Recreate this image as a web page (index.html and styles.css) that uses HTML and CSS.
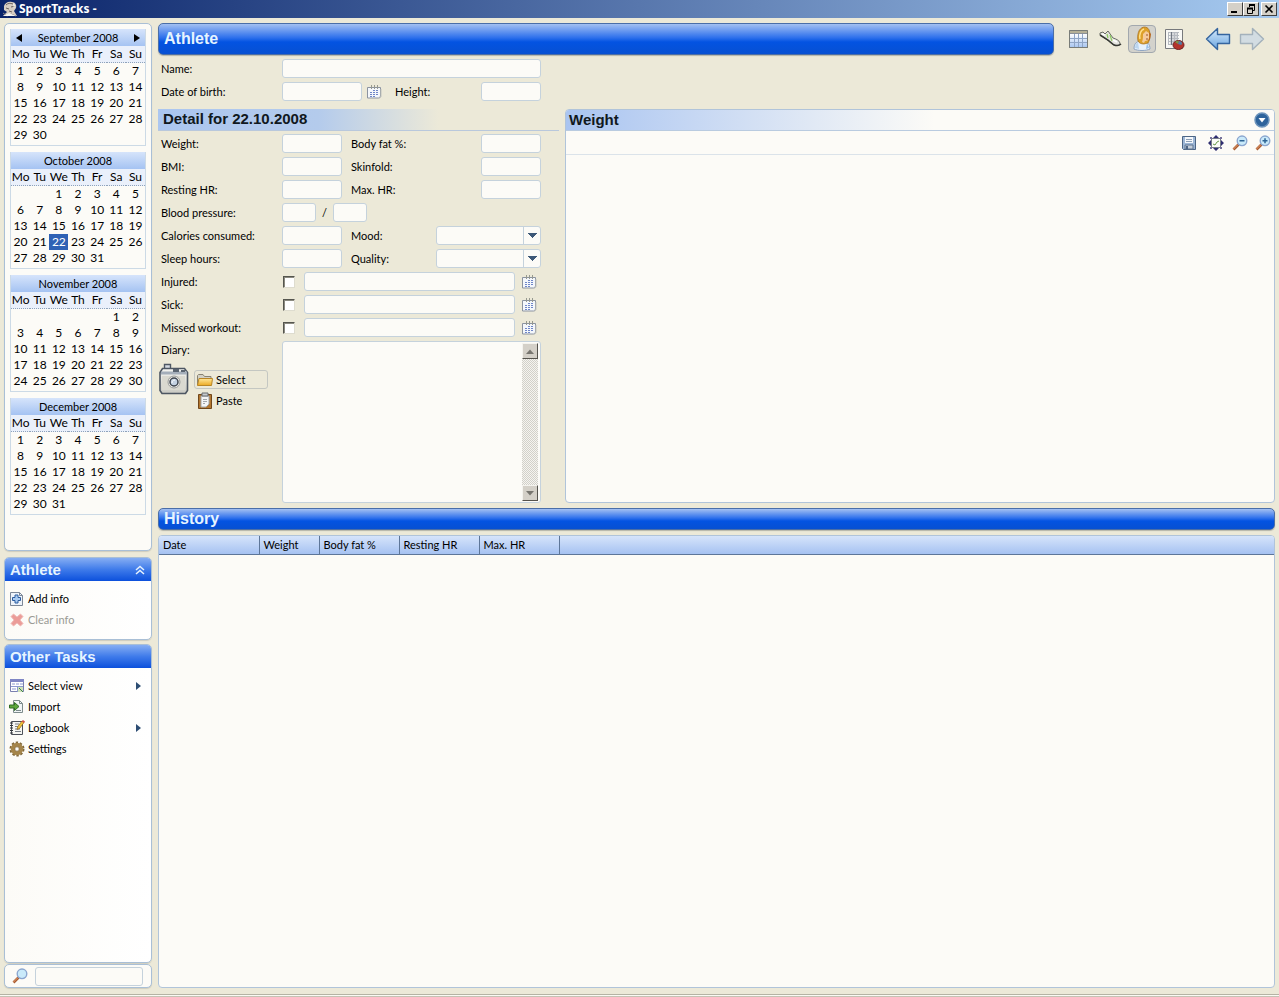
FILE: index.html
```html
<!DOCTYPE html>
<html lang="en">
<head>
<meta charset="utf-8">
<title>SportTracks</title>
<link rel="stylesheet" href="styles.css">
</head>
<body>
<svg class="defs" aria-hidden="true">
  <defs>
    <linearGradient id="gold" x2="0" y2="1"><stop offset="0" stop-color="#ffe79a"/><stop offset="1" stop-color="#eba922"/></linearGradient>
    <linearGradient id="arrowBlue" x2="0" y2="1"><stop offset="0" stop-color="#d5e9fb"/><stop offset="1" stop-color="#6aa5e0"/></linearGradient>
    <linearGradient id="silver" x2="0" y2="1"><stop offset="0" stop-color="#f6f6f2"/><stop offset="1" stop-color="#c9c9c2"/></linearGradient>
    <linearGradient id="cells" x2="0" y2="1"><stop offset="0" stop-color="#ffffff"/><stop offset="1" stop-color="#a9c6f0"/></linearGradient>
  </defs>
  <symbol id="i-date" viewBox="0 0 15 14">
    <path d="M.5 2.500h13v9l-2 1.500h-11z" fill="#f4f7fb" stroke="#8b93a0"/>
    <path d="M14 4v8l-2 1.500" fill="none" stroke="#c2c4bd"/>
    <path d="M4.500 0v4M7.500 0v4M10.500 0v4" stroke="#96998f"/>
    <path d="M6 5h2v1H6zM9 5h2v1H9zM3 7h2v1H3zM6 7h2v1H6zM9 7h2v1H9zM3 9h2v1H3zM6 9h2v1H6zM9 9h2v1H9zM3 11h2v1H3zM6 11h2v1H6z" fill="#6f86c8"/>
  </symbol>
  <symbol id="i-lens" viewBox="0 0 16 16">
    <path d="M1.500 14.500l5-5" stroke="#a85a30" stroke-width="2.600"/><path d="M1.500 14l4.500-4.500" stroke="#e8a070"/>
    <circle cx="10" cy="5.800" r="4.800" fill="#c9eafa" stroke="#8ba6cf" stroke-width="1.400"/>
  </symbol>
</svg>

<header class="titlebar">
  <svg class="app-icon" width="16" height="16" viewBox="0 0 16 16"><path d="M2 5C3 2 6 0 10 1c3 0 5 3 4 6l-2 3 3 5H1l4-4-3-2z" fill="#d6cdc2"/><path d="M4 4c2-2 4-2 7-1M4 7l3 1M9 6l4-1M7 10l3 1" stroke="#6d6360" fill="none"/><path d="M1 12l4 3 4-2 5 2" stroke="#8b8480" fill="none"/><path d="M1 15l6-3 7 3zM11 2l2 2-1 4" fill="#f5f4f0"/></svg>
  <h1 class="app-title">SportTracks -</h1>
  <div class="window-buttons">
    <button class="win-btn" aria-label="Minimize"><svg width="12" height="10"><path d="M2 8h6" stroke="#000" stroke-width="2"/></svg></button>
    <button class="win-btn" aria-label="Restore"><svg width="12" height="10" fill="none" stroke="#000"><path d="M4 1h6M2 4.500h6" stroke-width="2"/><path d="M4.500 1v2M9.500 1v5.500H8M2.500 4v5.500h5V4"/></svg></button>
    <button class="win-btn win-close" aria-label="Close"><svg width="12" height="10"><path d="M2.500 1.500l7 7M9.500 1.500l-7 7" stroke="#000" stroke-width="1.600"/></svg></button>
  </div>
</header>

<div class="workspace">
  <aside class="sidebar">
    <section class="box calendars" id="calendars"></section>

    <section class="box task-panel">
      <h2 class="panel-title">Athlete
        <button class="collapse" aria-label="Collapse"><svg width="10" height="10" fill="none" stroke="#e6f2ff" stroke-width="1.500"><path d="M1 5l4-3.500L9 5M1 9l4-3.500L9 9"/></svg></button>
      </h2>
      <ul class="tasks">
        <li><button class="task"><svg width="16" height="16" viewBox="0 0 16 16"><path d="M1.500 1.500h9l3 3v10h-12z" fill="#eef3fa" stroke="#7c8797"/><path d="M10.500 1.500v3h3" fill="none" stroke="#7c8797"/><path d="M6 4h3v2.500h2.500v3H9V12H6V9.500H3.500v-3H6z" fill="#a9cbf2" stroke="#2c5c9e"/></svg>Add info</button></li>
        <li><button class="task" disabled><svg width="16" height="16" viewBox="0 0 16 16"><path d="M2 4.500L4.500 2 8 5l3.500-3L14 4.500 11 8l3 3.500-2.500 2.500L8 11l-3.500 3L2 11.500 5 8z" fill="#eb9c98" stroke="#f0bcb8"/></svg>Clear info</button></li>
      </ul>
    </section>

    <section class="box task-panel other">
      <h2 class="panel-title">Other Tasks</h2>
      <ul class="tasks">
        <li><button class="task"><svg width="16" height="16" viewBox="0 0 16 16"><path d="M1.500 1.500h13v12h-13z" fill="#fff" stroke="#7b80ae"/><path d="M1 1h14v3H1z" fill="#7f86c4"/><path d="M3 6h3M7 6h3M11 6h3M2 8.500h12M3 11h4M8.500 8v6" stroke="#8d9bd0"/><path d="M9 9h5v5H9z" fill="#cfe3b8"/><path d="M10 10l4 4" stroke="#3c7c50"/></svg>Select view<span class="arrow-right"></span></button></li>
        <li><button class="task"><svg width="16" height="16" viewBox="0 0 16 16"><path d="M4.500 1.500h6l3 3v9h-9z" fill="#f1f5f6" stroke="#7e8c8c"/><path d="M10.500 1.500v3h3M7 11.500h5" fill="none" stroke="#7e8c8c"/><path d="M.5 6h5V3.500L10 7.500l-4.500 4V9h-5z" fill="#5da63c" stroke="#2f6d23"/></svg>Import</button></li>
        <li><button class="task"><svg width="16" height="16" viewBox="0 0 16 16"><path d="M2.500 1.500h11v13h-11z" fill="#f6f6f2" stroke="#4c5058"/><path d="M1 3h3M1 5.500h3M1 8h3M1 10.500h3M1 13h3" stroke="#33373c"/><path d="M6 4h4M6 6.500h3M6 9h5M6 11.500h6" stroke="#777d85"/><path d="M8 9.500l.8-3L13 1l2 1.500-4.500 6z" fill="#f1c43a" stroke="#87601c" stroke-width=".7"/><path d="M12.500 1.500L14 0l2 1.500-1 1.500z" fill="#cf5148"/></svg>Logbook<span class="arrow-right"></span></button></li>
        <li><button class="task"><svg width="16" height="16" viewBox="0 0 16 16"><circle cx="8" cy="8" r="6.500" fill="none" stroke="#80683a" stroke-width="2" stroke-dasharray="2.400 1.680"/><circle cx="8" cy="8" r="4.200" fill="#fff" stroke="#a5854a" stroke-width="4"/><circle cx="8" cy="8" r="2.200" fill="#fdfcf8" stroke="#7b6232" stroke-width=".7"/></svg>Settings</button></li>
      </ul>
    </section>

    <section class="box search">
      <svg width="16" height="16"><use href="#i-lens"/></svg>
      <input class="field search-field" type="text" aria-label="Search">
    </section>
  </aside>

  <main class="content">
    <div class="top">
      <h2 class="banner banner-main">Athlete</h2>
      <nav class="toolbar" aria-label="Views">
        <button class="tool" aria-label="Calendar view"><svg width="22" height="22" viewBox="0 0 22 22"><path d="M2 2h19v18H2z" fill="#8a9098"/><path d="M2 2h19v3H2z" fill="#b5b097"/><path d="M3 6h17v13H3z" fill="url(#cells)"/><path d="M7.500 6v13M11.500 6v13M15.500 6v13M3 10.500h17M3 14.500h17" stroke="#8fa5c6"/><path d="M2.500 2.500h18v17h-18z" fill="none" stroke="#787c78"/></svg></button>
        <button class="tool" aria-label="Activity view"><svg width="24" height="22" viewBox="0 0 24 22"><path d="M2 5l3-1 2 2 3-3 5 7c3 1 6 2 7 5 0 3-4 3-8 1l-6-5-6-4z" fill="#e4e4df" stroke="#6a6c66"/><path d="M2 7l8 5 6 5c3 1 5 1 7-1" fill="none" stroke="#353732" stroke-width="1.500"/><path d="M9 6l1 4M12 7l2 6" stroke="#8cc95c" stroke-width="1.200"/><path d="M4 6l3 1M15 12l4 2" stroke="#fff" stroke-width="1.500"/></svg></button>
        <button class="tool is-active" aria-label="Athlete view"><svg width="24" height="26" viewBox="0 0 24 26"><path d="M4 23c0-6 3-8 8-8s8 3 8 8c-4 2-12 2-16 0z" fill="#e8f2fc" stroke="#8fa5c2"/><path d="M5 22c0-3 1-5 3-6l1 7z" fill="#bcd6f0"/><path d="M17 17l2 5-3 1z" fill="#9bc0e8"/><path d="M8 15C7 10 8 2 14 1c5 0 6 4 6 9 0 3-1 5-2 7l-4 1c-3 0-5-1-6-3z" fill="#dda02a" stroke="#a46a16" stroke-width=".7"/><path d="M13 8l3-3 3 2v5c0 2-2 3-4 3l-1 2-2-1c1-3 1-5 1-8z" fill="#f5cb9b"/><path d="M10 13c-1-5 1-9 4-10" fill="none" stroke="#ffe08a" stroke-width="1.500"/><path d="M19 6c1 4 0 7-1 10l2-3 1-5z" fill="#b8651b"/><path d="M16 9h2M16 13h2" stroke="#9b5533"/></svg></button>
        <button class="tool" aria-label="Reports view"><svg width="22" height="24" viewBox="0 0 22 24"><path d="M2.500 2.500h17v19h-17z" fill="#f8f8f5" stroke="#77797c"/><path d="M7 5h8v13H7z" fill="#d5d7da"/><path d="M5.500 5v13M8.500 5v13M11.500 5v13M14.500 5v13M5 5.500h11M5 8.500h11M5 11.500h11M5 14.500h11M5 17.500h8" stroke="#b5b9bf"/><path d="M8.500 5v13" stroke="#707782"/><ellipse cx="15.500" cy="18" rx="5.500" ry="4.500" fill="#b3332c" stroke="#6f2222"/><path d="M15 17l-3-2c2-2 4-1 4-1z" fill="#789447"/><path d="M15 17l1-3c3 0 4 3 2 4z" fill="#527ca8"/></svg></button>
        <button class="tool nav-back" aria-label="Back"><svg width="26" height="24" viewBox="0 0 26 24"><path d="M1.500 12L12.500 1.500v6H24.500v9h-12v6z" fill="url(#arrowBlue)" stroke="#35659f" stroke-width="1.400" stroke-linejoin="round"/></svg></button>
        <button class="tool nav-next" aria-label="Forward"><svg width="26" height="24" viewBox="0 0 26 24"><path d="M24.500 12L13.500 1.500v6H1.500v9h12v6z" fill="#d2dce2" stroke="#a3b1bb" stroke-width="1.400" stroke-linejoin="round"/></svg></button>
      </nav>
    </div>

    <form class="identity">
      <div class="row"><label class="label" for="name">Name:</label><input class="field grow" id="name" type="text"></div>
      <div class="row">
        <label class="label" for="dob">Date of birth:</label><input class="field w80" id="dob" type="text">
        <button class="date-btn" type="button" aria-label="Pick date of birth"><svg width="15" height="14"><use href="#i-date"/></svg></button>
        <label class="label-height" for="height">Height:</label><input class="field w60 push" id="height" type="text">
      </div>
    </form>

    <div class="middle">
      <form class="detail">
        <h3 class="detail-title">Detail for 22.10.2008</h3>
        <div class="row"><label class="label" for="weight">Weight:</label><input class="field w60" id="weight" type="text"><label class="label2" for="fat">Body fat %:</label><input class="field w60 push" id="fat" type="text"></div>
        <div class="row"><label class="label" for="bmi">BMI:</label><input class="field w60" id="bmi" type="text"><label class="label2" for="skin">Skinfold:</label><input class="field w60 push" id="skin" type="text"></div>
        <div class="row"><label class="label" for="rest">Resting HR:</label><input class="field w60" id="rest" type="text"><label class="label2" for="max">Max. HR:</label><input class="field w60 push" id="max" type="text"></div>
        <div class="row"><label class="label" for="bp1">Blood pressure:</label><input class="field w34" id="bp1" type="text"><span class="slash">/</span><input class="field w34" type="text" aria-label="Diastolic pressure"></div>
        <div class="row"><label class="label" for="cal">Calories consumed:</label><input class="field w60" id="cal" type="text"><label class="label2" for="mood">Mood:</label><select class="field combo push" id="mood"><option></option></select></div>
        <div class="row"><label class="label" for="sleep">Sleep hours:</label><input class="field w60" id="sleep" type="text"><label class="label2" for="quality">Quality:</label><select class="field combo push" id="quality"><option></option></select></div>
        <div class="row"><label class="label" for="injured">Injured:</label><input class="check" id="injured" type="checkbox"><input class="field grow" type="text" aria-label="Injury note"><button class="date-btn" type="button" aria-label="Pick injury dates"><svg width="15" height="14"><use href="#i-date"/></svg></button></div>
        <div class="row"><label class="label" for="sick">Sick:</label><input class="check" id="sick" type="checkbox"><input class="field grow" type="text" aria-label="Sickness note"><button class="date-btn" type="button" aria-label="Pick sickness dates"><svg width="15" height="14"><use href="#i-date"/></svg></button></div>
        <div class="row"><label class="label" for="missed">Missed workout:</label><input class="check" id="missed" type="checkbox"><input class="field grow" type="text" aria-label="Missed workout note"><button class="date-btn" type="button" aria-label="Pick missed dates"><svg width="15" height="14"><use href="#i-date"/></svg></button></div>
        <div class="row diary-row">
          <div class="diary-side">
            <label class="diary-label" for="diary">Diary:</label>
            <div class="photo">
              <svg width="30" height="32" viewBox="0 0 30 32"><path d="M5.500 6V1.500h6V7" fill="#d4dae2" stroke="#4d5662" stroke-width="1.400"/><path d="M3.500 5.500h22l3 4v18l-2 3H3l-2-3V9.500z" fill="url(#silver)" stroke="#4d5662" stroke-width="1.600"/><path d="M2 8.500h26v3H2z" fill="#a4aeba"/><path d="M14 6h6v3h-6zM22 7h4v2h-4z" fill="#5a6470"/><path d="M3 13h23v14H3z" fill="#dad9d0"/><circle cx="15" cy="19" r="6" fill="#efeee8" stroke="#9a9c9b"/><circle cx="15" cy="19" r="4" fill="#c4d2e2" stroke="#3c434d" stroke-width="1.500"/><path d="M13 20c0-2 1-3 3-3" fill="none" stroke="#fff"/></svg>
              <div class="photo-actions">
                <button class="mini-btn framed" type="button"><svg width="16" height="16" viewBox="0 0 16 16"><path d="M.5 13V3.500l1-1H6L7.500 4.500H14V7" fill="#d2d0c4" stroke="#888373"/><path d="M.5 13.500L2 6.500h13.500l-1 7z" fill="url(#gold)" stroke="#b98625"/></svg>Select</button>
                <button class="mini-btn" type="button"><svg width="16" height="18" viewBox="0 0 16 18"><path d="M1.500 2.500h13v14h-13z" fill="#b2762f" stroke="#70461a"/><path d="M4 4h8v8l-3 3H4z" fill="#f4f5f6" stroke="#a3a7ac"/><path d="M5 1h6v3H5z" fill="#c6cacd" stroke="#676b6e"/><path d="M6 7.500h4M6 9.500h4M6 11.500h2" stroke="#a0a5aa"/></svg>Paste</button>
              </div>
            </div>
          </div>
          <div class="diary-box">
            <textarea class="diary" id="diary"></textarea>
            <div class="scroll">
              <button class="scroll-btn" type="button" aria-label="Scroll up"><svg width="8" height="5"><path d="M0 5l4-4.500L8 5z" fill="#77756f"/></svg></button>
              <button class="scroll-btn" type="button" aria-label="Scroll down"><svg width="8" height="5"><path d="M0 0h8L4 4.500z" fill="#77756f"/></svg></button>
            </div>
          </div>
        </div>
      </form>

      <section class="chart">
        <div class="chart-head">
          <h3 class="chart-title">Weight</h3>
          <button class="icon-btn" aria-label="Chart menu"><svg width="16" height="16"><circle cx="8" cy="8" r="7" fill="#2f649c" stroke="#6d94bc" stroke-width="1.500"/><path d="M4.500 6h7L8 10.500z" fill="#fff"/></svg></button>
        </div>
        <div class="chart-tools">
          <button class="icon-btn save" aria-label="Save chart"><svg width="16" height="16"><path d="M1.500 1.500h13v13h-12l-1-1z" fill="#9db7d6" stroke="#4d6685"/><path d="M4 2h8v6H4z" fill="#f5f8fb"/><path d="M5 4.500h6M5 6.500h6" stroke="#8da0b6"/><path d="M4 10h8v4H4z" fill="#c5cfda" stroke="#5e7590"/><path d="M5 11h2v3H5z" fill="#4d6685"/></svg></button>
          <button class="icon-btn fit" aria-label="Zoom to fit"><svg width="16" height="16"><path d="M3.500 3.500h9v9h-9z" fill="#fbfcf8" stroke="#777d88"/><path d="M8 0l3 3H5zM8 16l3-3H5zM0 8l3-3v6zM16 8l-3-3v6z" fill="#2f2e70"/><path d="M2 2h2v2H2zM12 2h2v2h-2zM2 12h2v2H2zM12 12h2v2h-2z" fill="#77739c"/><path d="M5 9l2 1 2-3 2-1" fill="none" stroke="#699b4b"/></svg></button>
          <button class="icon-btn" aria-label="Zoom out"><svg width="16" height="16"><use href="#i-lens"/><path d="M7.500 5.800h5" stroke="#2d6494" stroke-width="1.500"/></svg></button>
          <button class="icon-btn zoom-in" aria-label="Zoom in"><svg width="16" height="16"><use href="#i-lens"/><path d="M7.500 5.800h5M10 3.300v5" stroke="#2d6494" stroke-width="1.500"/></svg></button>
        </div>
      </section>
    </div>

    <h2 class="banner banner-history">History</h2>
    <section class="history">
      <table class="history-table">
        <thead><tr><th class="c-date">Date</th><th class="c-weight">Weight</th><th class="c-wide">Body fat %</th><th class="c-wide">Resting HR</th><th class="c-wide">Max. HR</th><th class="c-rest"></th></tr></thead>
      </table>
    </section>
  </main>
</div>
<footer class="statusbar"></footer>
<script src="app.js"></script>
</body>
</html>
```
FILE: styles.css
```css
* { box-sizing: border-box; }

body {
  margin: 0;
  min-height: 100vh;
  display: flex;
  flex-direction: column;
  background: #ece9d8;
  color: #000;
  font: 11px/16px Lato, "Liberation Sans", sans-serif;
}

button, input, select, textarea { font: inherit; color: inherit; margin: 0; }
button { background: none; border: 0; padding: 0; display: flex; align-items: center; }
h1, h2, h3, ul { margin: 0; padding: 0; }
ul { list-style: none; }
svg { display: block; flex: none; }
.defs { position: absolute; width: 0; height: 0; }

/* Title bar */
.titlebar {
  display: flex;
  align-items: center;
  height: 18px;
  padding: 0 2px;
  background: linear-gradient(90deg, #0a246a, #a6caf0);
}
.app-title { flex: 1; margin-left: 1px; color: #fff; font: bold 12px/16px "Noto Sans", sans-serif; }
.window-buttons { display: flex; }
.win-btn {
  width: 16px;
  height: 14px;
  justify-content: center;
  background: #d4d0c8;
  border: 1px solid;
  border-color: #fff #404040 #404040 #fff;
}
.win-close { margin-left: 2px; }

/* Frame */
.workspace { flex: 1; display: flex; gap: 6px; padding: 5px 4px 6px; }
.sidebar { width: 148px; flex: none; display: flex; flex-direction: column; }
.box {
  background: #fcfbf7;
  border: 1px solid #a9bfd6;
  border-radius: 5px;
  box-shadow: 0 1px 1px #cfcdbf;
}

/* Calendars */
.calendars { display: flex; flex-direction: column; gap: 6px; height: 528px; padding: 5px; font-size: 12px; }
.month { width: 100%; height: 117px; border: 1px solid #ccdae6; border-top: 0; }
.month-head {
  display: flex;
  align-items: center;
  justify-content: space-between;
  height: 17px;
  padding: 0 5px;
  background: linear-gradient(#d6e4fb, #a5c3f2);
}
.month-name { flex: 1; text-align: center; font-size: 11px; }
.tri-left, .tri-right { border: 4px solid transparent; width: 0; }
.tri-left { border-right: 6px solid #000; border-left: 0; }
.tri-right { border-left: 6px solid #000; border-right: 0; }
.days { width: 100%; border-collapse: collapse; table-layout: fixed; }
.days th, .days td { padding: 0; height: 16px; line-height: 16px; text-align: center; font-weight: normal; }
.days th { background: #eaf0fb; border-bottom: 1px dotted #8fa3bb; }
.days .today { background: #2f62b5; color: #fff; }

/* Task panels */
.task-panel { margin-top: 6px; height: 83px; overflow: hidden; background: linear-gradient(90deg, #fcfbf7, #fff); }
.other { margin-top: 4px; height: auto; flex: 1; }
.panel-title {
  display: flex;
  align-items: center;
  justify-content: space-between;
  height: 23px;
  padding: 0 6px 0 5px;
  color: #e6f4ff;
  background: linear-gradient(#86aef3, #3f7bea 50%, #0c50dc);
  font: bold 15px/20px "Liberation Sans", sans-serif;
}
.tasks { padding-top: 7px; }
.task { width: 100%; height: 21px; gap: 3px; padding: 0 10px 0 4px; }
.task:disabled { color: #9a9a94; }
.arrow-right { margin-left: auto; border: 4px solid transparent; border-left: 5px solid #2d4d73; border-right: 0; }

.search { display: flex; align-items: center; gap: 7px; height: 24px; margin-top: 1px; padding: 0 8px 0 7px; }
.field {
  height: 19px;
  min-width: 0;
  padding: 0 4px;
  background: #fcfbf7;
  border: 1px solid #c5d2dc;
  border-radius: 3px;
}
.search-field { flex: 1; }

/* Content */
.content { flex: 1; min-width: 0; display: flex; flex-direction: column; }
.top { display: flex; align-items: center; }
.banner {
  color: #e6f4ff;
  padding-left: 5px;
  border: 1px solid #4a6ea8;
  border-radius: 5px;
  background: linear-gradient(#a3c0f2, #2f71ec 45%, #0353e2 60%, #0750d2);
  box-shadow: 0 1px 1px #b5b5aa;
}
.banner-main { flex: 1; height: 32px; font: bold 16px/29px "Liberation Sans", sans-serif; }
.toolbar { display: flex; gap: 4px; padding: 0 9px 0 10px; }
.tool { width: 28px; height: 28px; justify-content: center; border: 1px solid transparent; border-radius: 4px; }
.is-active { background: #d3d2cc; border-color: #a2a8ae; }
.nav-back { margin-left: 12px; }
.nav-next { margin-left: 2px; }

.identity { padding: 2px 0 6px; width: 401px; }
.row { display: flex; align-items: center; height: 23px; padding: 0 18px 0 3px; }
.label { width: 121px; flex: none; }
.label2 { margin-left: 9px; }
.label-height { margin-left: 13px; }
.grow { flex: 1; }
.push { margin-left: auto; }
.w34 { width: 34px; }
.w60 { width: 60px; }
.w80 { width: 80px; }
.slash { width: 17px; text-align: center; }
.date-btn { margin-left: 5px; }
.check {
  appearance: none;
  width: 12px;
  height: 12px;
  margin: 0 9px 0 1px;
  background: #fff;
  border: 1px solid;
  border-color: #55554e #dedccf #dedccf #55554e;
  box-shadow: inset 1px 1px #8b8a80;
}
.grow + .date-btn { margin: 0 4px 0 7px; }
.combo {
  appearance: none;
  width: 105px;
  background:
    linear-gradient(#3d5877, #3d5877) right 3px top 6px / 9px 1px no-repeat,
    linear-gradient(#3d5877, #3d5877) right 4px top 7px / 7px 1px no-repeat,
    linear-gradient(#3d5877, #3d5877) right 5px top 8px / 5px 1px no-repeat,
    linear-gradient(#3d5877, #3d5877) right 6px top 9px / 3px 1px no-repeat,
    linear-gradient(#3d5877, #3d5877) right 7px top 10px / 1px 1px no-repeat,
    linear-gradient(#c5d2dc, #c5d2dc) right 16px top 0 / 1px 100% no-repeat,
    #fcfbf7;
}

.middle { display: flex; gap: 6px; }
.detail { width: 401px; flex: none; }
.detail-title, .chart-title { font: bold 15px/20px "Liberation Sans", sans-serif; color: #101820; }
.detail-title {
  height: 22px;
  margin-bottom: 1px;
  padding-left: 5px;
  background: linear-gradient(90deg, #abc6f0, #b4cbec 40%, #ece9d8 70%);
  border-bottom: 1px solid #b9c8dc;
}
.diary-row { height: 164px; align-items: flex-start; padding-top: 2px; }
.diary-side { width: 121px; }
.diary-label { display: block; padding-top: 1px; }
.photo { display: flex; margin: 5px 0 0 -2px; gap: 5px; }
.photo-actions { display: flex; flex-direction: column; gap: 2px; padding-top: 7px; }
.mini-btn { height: 19px; width: 74px; gap: 3px; padding-left: 2px; border: 1px solid transparent; border-radius: 3px; }
.framed { border-color: #c4c7c2; }
.diary-box { display: flex; flex: 1; height: 162px; padding: 1px 2px 1px 0; background: #fcfbf7; border: 1px solid #c5d2dc; border-radius: 3px; }
.diary { flex: 1; min-width: 0; border: 0; resize: none; background: transparent; overflow: hidden; }
.scroll {
  width: 16px;
  display: flex;
  flex-direction: column;
  justify-content: space-between;
  background: repeating-conic-gradient(#d2d0c9 0 25%, #f5f4f0 0 50%) 0 0 / 2px 2px;
}
.scroll-btn { width: 16px; height: 16px; justify-content: center; background: #d4d0c8; border: 1px solid; border-color: #f4f3ee #55534d #55534d #f4f3ee; }

.chart { flex: 1; min-width: 0; background: #fcfbf7; border: 1px solid #b0c4da; border-radius: 4px; overflow: hidden; }
.chart-head {
  display: flex;
  align-items: center;
  justify-content: space-between;
  height: 21px;
  padding: 0 4px 0 3px;
  background: linear-gradient(90deg, #a9c4f1, #fcfbf7 52%);
  border-bottom: 1px solid #b9cbe0;
}
.chart-tools { display: flex; align-items: center; justify-content: flex-end; height: 24px; padding-right: 3px; border-bottom: 1px solid #dbe3ea; }
.save { margin-right: 11px; }
.fit { margin-right: 8px; }
.zoom-in { margin-left: 7px; }

.banner-history { height: 22px; margin-top: 5px; font: bold 16px/19px "Liberation Sans", sans-serif; }
.history { flex: 1; margin-top: 5px; background: #fcfbf7; border: 1px solid #b0c4da; border-radius: 4px; overflow: hidden; }
.history-table { width: 100%; border-collapse: collapse; table-layout: fixed; background: linear-gradient(#d6e4fb, #a3c0f1); }
.history-table th {
  height: 18px;
  padding: 0 4px;
  line-height: 18px;
  font-weight: normal;
  text-align: left;
  border-right: 1px solid #5d7699;
  border-bottom: 1px solid #5d7699;
}
.history-table .c-date { width: 100px; }
.history-table .c-weight { width: 60px; }
.history-table .c-wide { width: 80px; }
.history-table .c-rest { border-right: 0; }

.statusbar { height: 3px; border-top: 1px solid #b5b3a4; background: #fbfaf4; border-bottom: 1px solid #c5c3b4; }
```
FILE: app.js
```js
const weekdays = ["Mo", "Tu", "We", "Th", "Fr", "Sa", "Su"];
// name, blank cells before day 1, number of days, selected day
const months = [
  ["September 2008", 0, 30, 0],
  ["October 2008", 2, 31, 22],
  ["November 2008", 5, 30, 0],
  ["December 2008", 0, 31, 0],
];

document.getElementById("calendars").innerHTML = months.map(([name, lead, count, selected], index) => {
  let rows = "";
  for (let first = 1 - lead; first <= count; first += 7) {
    rows += "<tr>";
    for (let day = first; day < first + 7; day++) {
      const text = day >= 1 && day <= count ? day : "";
      rows += `<td${text && day === selected ? ' class="today"' : ""}>${text}</td>`;
    }
    rows += "</tr>";
  }
  const prev = index === 0 ? '<button aria-label="Previous month"><span class="tri-left"></span></button>' : "";
  const next = index === 0 ? '<button aria-label="Next month"><span class="tri-right"></span></button>' : "";
  return `<div class="month"><div class="month-head">${prev}<span class="month-name">${name}</span>${next}</div>
    <table class="days"><thead><tr>${weekdays.map(d => `<th>${d}</th>`).join("")}</tr></thead><tbody>${rows}</tbody></table></div>`;
}).join("");
```
